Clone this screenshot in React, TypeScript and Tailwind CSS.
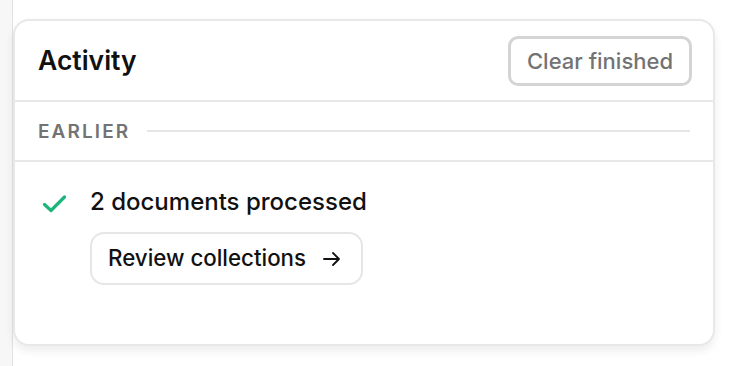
import React from "react";

export default function App() {
  return (
    <div className="w-[756px] h-[366px] bg-white flex overflow-hidden font-['Inter',sans-serif] text-[#111111]">
      <div className="w-[13px] shrink-0 bg-[#f7f7f7] border-r border-[#e2e2e2]" />
      <div className="flex-1 pt-[19px] pr-[41px]">
        <div className="h-[327px] bg-white border-2 border-[#e8e8e8] rounded-[16px] shadow-[0_5px_10px_rgba(0,0,0,0.07)] flex flex-col">
          <div className="h-[81px] shrink-0 flex items-center justify-between pl-[23px] pr-[21px] border-b-2 border-[#e8e8e8]">
            <div className="text-[26.5px] font-semibold leading-none">Activity</div>
            <button className="h-[50px] px-[16px] border-[3px] border-[#d4d4d4] rounded-[10px] text-[22px] font-medium text-[#737373] leading-none">
              Clear finished
            </button>
          </div>
          <div className="h-[60px] shrink-0 flex items-center pl-[23px] pr-[23px] gap-[17px] border-b-2 border-[#e8e8e8]">
            <div className="text-[19px] font-semibold tracking-[0.11em] text-[#737373] leading-none">EARLIER</div>
            <div className="flex-1 h-[2px] bg-[#e6e6e6]" />
          </div>
          <div className="pt-[24px] pl-[27px] flex gap-[24px]">
            <svg width="24" height="24" viewBox="0 0 24 24" className="mt-[6px] shrink-0">
              <path d="M2.5 12.5 L9 18.5 L22.5 5" fill="none" stroke="#1db57a" strokeWidth="3.2" strokeLinecap="round" strokeLinejoin="round" />
            </svg>
            <div className="flex flex-col items-start">
              <div className="text-[24px] font-medium leading-[32px]">2 documents processed</div>
              <button className="mt-[14px] h-[53px] flex items-center gap-[16px] pl-[16px] pr-[19px] border-2 border-[#e6e6e6] rounded-[14px] text-[22.3px] font-medium leading-none">
                Review collections
                <svg width="20" height="20" viewBox="0 0 20 20">
                  <path d="M2 10 H17 M11 4 L17 10 L11 16" fill="none" stroke="#111" strokeWidth="1.8" strokeLinecap="round" strokeLinejoin="round" />
                </svg>
              </button>
            </div>
          </div>
        </div>
      </div>
    </div>
  );
}
